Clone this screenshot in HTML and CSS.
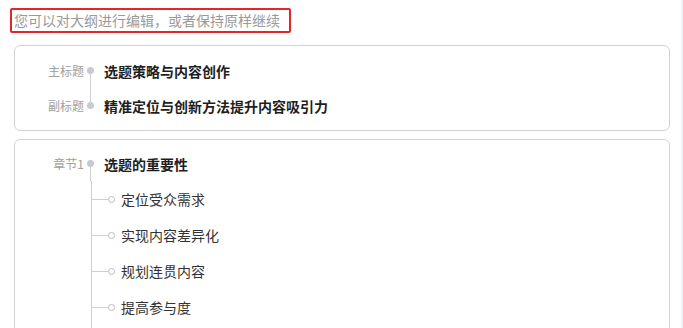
FILE: index.html
```html
<!DOCTYPE html>
<html lang="zh-CN">
<head>
<meta charset="utf-8">
<title>大纲</title>
<link rel="stylesheet" href="styles.css">
</head>
<body>
<div class="shell">
  <main class="page">
    <div class="hint-wrap">
      <div class="hint">您可以对大纲进行编辑，或者保持原样继续</div>
    </div>

    <section class="card card-title">
      <div class="row">
        <span class="label">主标题</span>
        <span class="node node-first"><i class="dot"></i></span>
        <span class="title">选题策略与内容创作</span>
      </div>
      <div class="row">
        <span class="label">副标题</span>
        <span class="node node-last"><i class="dot"></i></span>
        <span class="title">精准定位与创新方法提升内容吸引力</span>
      </div>
    </section>

    <section class="card card-chapter">
      <div class="row">
        <span class="label">章节1</span>
        <span class="node node-first"><i class="dot dot-chapter"></i></span>
        <span class="title">选题的重要性</span>
      </div>
      <ul class="children">
        <li class="child"><span class="branch"></span><span class="ring"></span><span class="child-text">定位受众需求</span></li>
        <li class="child"><span class="branch"></span><span class="ring"></span><span class="child-text">实现内容差异化</span></li>
        <li class="child"><span class="branch"></span><span class="ring"></span><span class="child-text">规划连贯内容</span></li>
        <li class="child"><span class="branch"></span><span class="ring"></span><span class="child-text">提高参与度</span></li>
      </ul>
    </section>
  </main>
  <div class="scroll-stripe"></div>
</div>
</body>
</html>
```

FILE: styles.css
```css
* { box-sizing: border-box; }

html, body {
  margin: 0;
  padding: 0;
  background: #ffffff;
  height: 328px;
  overflow: hidden;
}

body {
  font-family: "Noto Sans CJK SC", "Noto Sans", "Liberation Sans", sans-serif;
  color: #333;
}

.shell {
  display: flex;
  height: 328px;
}

.page {
  flex: 1;
  padding: 8px 11px 0 14px;
}

.scroll-stripe {
  width: 2px;
  background: #edf2fb;
}

.hint-wrap {
  display: flex;
}

.hint {
  margin-left: -4px;
  border: 2px solid #e3262b;
  border-radius: 2px;
  padding: 0 9px 0 2px;
  font-size: 14px;
  line-height: 21px;
  height: 25px;
  color: #9a9a9a;
  white-space: nowrap;
}

.card {
  border: 1px solid #d2d2d2;
  border-radius: 6px;
  background: #fff;
}

.card-title {
  margin-top: 12px;
  padding: 7px 0;
}

.card-chapter {
  margin-top: 8px;
  padding: 6px 0 0;
}

.row {
  display: flex;
  align-items: center;
  height: 35px;
}

.label {
  width: 69px;
  text-align: right;
  font-size: 12px;
  color: #a0a0a0;
  white-space: nowrap;
}

.node {
  position: relative;
  width: 14px;
  height: 100%;
  display: flex;
  align-items: center;
  justify-content: center;
}

.node::after {
  content: "";
  position: absolute;
  left: 6px;
  width: 1px;
  background: #cfcfcf;
}

.node-first::after { top: 50%; bottom: 0; }
.node-last::after { top: 0; bottom: 50%; }

.dot {
  position: relative;
  z-index: 1;
  width: 7px;
  height: 7px;
  border-radius: 50%;
  background: #c9cbd0;
  margin-left: -1px;
}

.dot-chapter { background: #c6c8d9; }

.title {
  margin-left: 6px;
  font-size: 14px;
  font-weight: 700;
  color: #1e1e1e;
  white-space: nowrap;
}

.children {
  list-style: none;
  margin: 0 0 0 76px;
  padding: 0 0 40px;
  border-left: 1px solid #cfcfcf;
}

.child {
  display: flex;
  align-items: center;
  height: 36px;
}

.branch {
  width: 16px;
  height: 1px;
  background: #cfcfcf;
}

.ring {
  width: 7px;
  height: 7px;
  border: 1px solid #bdbdbd;
  border-radius: 50%;
  background: #fff;
}

.child-text {
  margin-left: 6px;
  font-size: 14px;
  color: #333;
  white-space: nowrap;
}
```
